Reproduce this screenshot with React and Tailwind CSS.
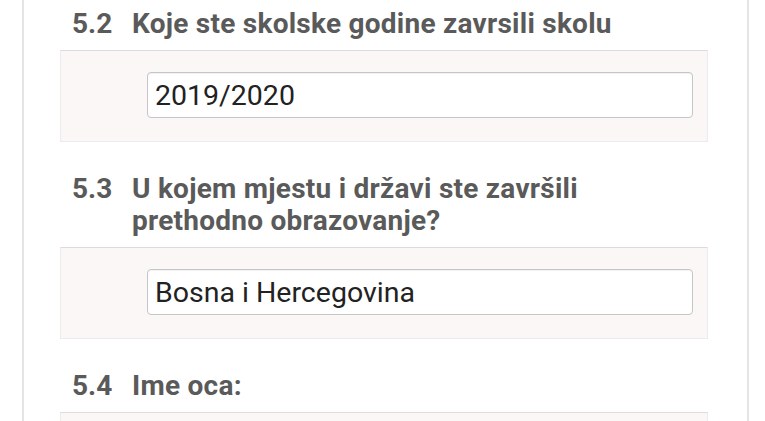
import React from 'react';

const questions = [
    { num: '5.2', label: 'Koje ste skolske godine zavrsili skolu', value: '2019/2020', first: true },
    { num: '5.3', label: 'U kojem mjestu i državi ste završili prethodno obrazovanje?', value: 'Bosna i Hercegovina' },
    { num: '5.4', label: 'Ime oca:', value: '' },
];

function Question({ num, label, value, first }) {
    return (
        <div>
            <div className={`flex pl-[12px] pr-[40px] pb-[10px] text-[28px] leading-[32px] font-bold text-[#5a5a5a] ${first ? 'pt-[8px]' : 'pt-[31px]'}`}>
                <span className="w-[60px] shrink-0">{num}</span>
                <span className="tracking-[0.25px]">{label}</span>
            </div>
            <div className="bg-[#faf7f6] border border-[#ececec] border-t-[#dcdcdc] pt-[21px] pb-[23px] pl-[86px] pr-[14px]">
                <input
                    type="text"
                    defaultValue={value}
                    className="w-full h-[46px] bg-white border border-[#c6c6c6] rounded-[4px] px-[7px] text-[28.5px] text-[#222] outline-none shadow-[inset_0_1px_1px_rgba(0,0,0,0.06)]"
                />
            </div>
        </div>
    );
}

export default function App() {
    return (
        <div className="w-[765px] h-[421px] overflow-hidden bg-white" style={{ fontFamily: 'Roboto, "Noto Sans", sans-serif' }}>
            <div className="ml-[22px] w-[727px] h-full border-l-[2px] border-r-[2px] border-[#e4e4e4] pl-[36px] pr-[39px]">
                {questions.map(q => (
                    <Question key={q.num} {...q} />
                ))}
            </div>
        </div>
    );
}
